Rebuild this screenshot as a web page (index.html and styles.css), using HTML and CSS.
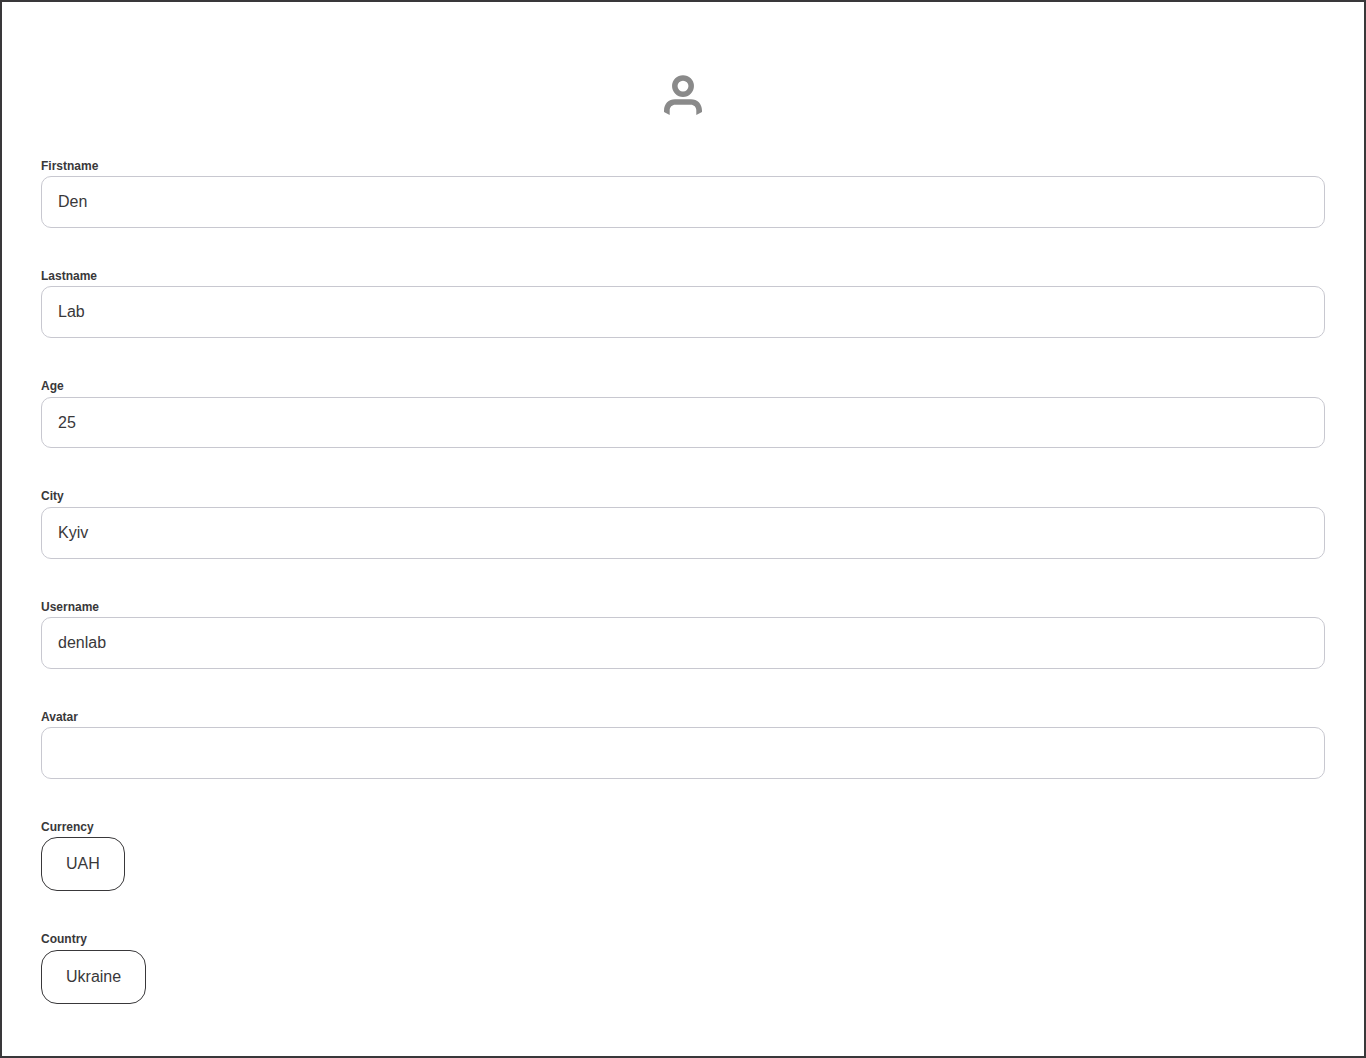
FILE: index.html
```html
<!DOCTYPE html>
<html lang="en">
<head>
<meta charset="utf-8">
<title>Profile</title>
<link rel="stylesheet" href="styles.css">
</head>
<body>
<main class="card">
  <div class="avatar">
    <svg class="avatar-icon" viewBox="0 0 40 42">
      <circle cx="20" cy="12.1" r="8.2" fill="none" stroke="#8a8a8a" stroke-width="5.5"/>
      <path fill="#8a8a8a" d="M6.700 41 L1 38 V36.400 C1 29.800 5.600 25.200 12 25.200 H28 C34.400 25.200 39 29.800 39 36.400 V38 L33.300 41 V36.500 C33.300 33 31 30.700 27.700 30.700 H12.300 C9 30.700 6.700 33 6.700 36.500Z"/>
    </svg>
  </div>
  <div class="field"><label class="label">Firstname</label><div class="input">Den</div></div>
  <div class="field"><label class="label">Lastname</label><div class="input">Lab</div></div>
  <div class="field"><label class="label">Age</label><div class="input">25</div></div>
  <div class="field"><label class="label">City</label><div class="input">Kyiv</div></div>
  <div class="field"><label class="label">Username</label><div class="input">denlab</div></div>
  <div class="field"><label class="label">Avatar</label><div class="input"></div></div>
  <div class="field"><label class="label">Currency</label><button class="select">UAH</button></div>
  <div class="field"><label class="label">Country</label><button class="select">Ukraine</button></div>
</main>
</body>
</html>
```
FILE: styles.css
```css
* { box-sizing: border-box; }
body { margin: 0; background: #fff; color: #39383a; font: 16px/24px "Liberation Sans", Arial, sans-serif; }
.card { display: flex; flex-direction: column; gap: 40px; height: 1058px; padding: 45px 39px 0; border: 2px solid #39383a; }
.avatar { display: flex; justify-content: center; height: 70.8px; padding-top: 27px; }
.avatar-icon { width: 40px; height: 42px; }
.field { display: flex; flex-direction: column; align-items: flex-start; }
.label { height: 18.4px; font-size: 12px; line-height: 16px; font-weight: 700; }
.input { width: 100%; height: 51.8px; padding: 13px 16px; border: 1px solid #c8c8d0; border-radius: 10px; }
.select { height: 54px; padding: 0 24px; border: 1px solid #39383a; border-radius: 16px; background: #fff; color: #39383a; font: inherit; }
```
